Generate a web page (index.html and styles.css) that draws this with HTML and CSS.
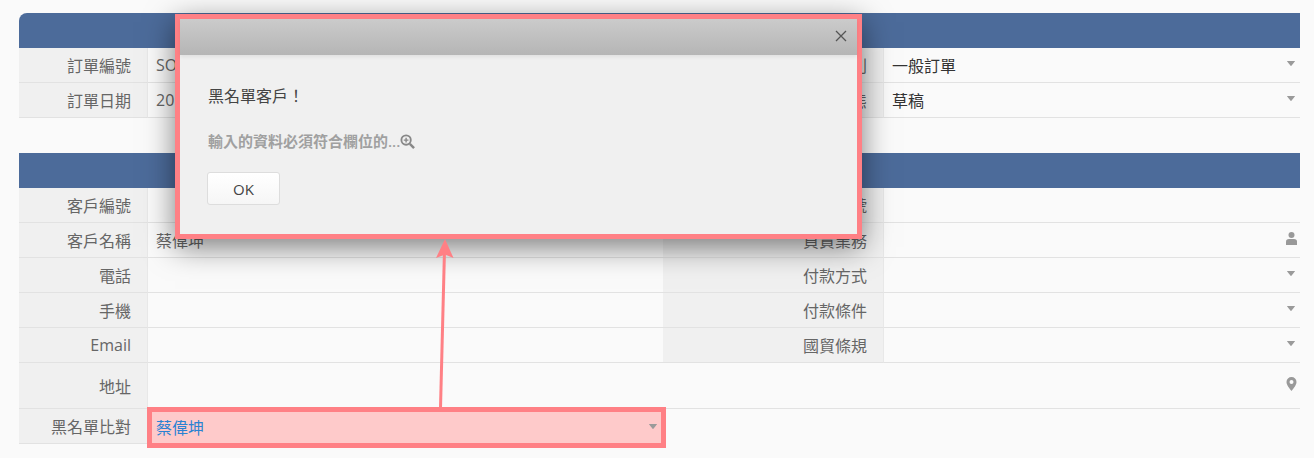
FILE: index.html
```html
<!DOCTYPE html>
<html lang="zh-Hant">
<head>
    <meta charset="UTF-8">
    <meta name="viewport" content="width=device-width, initial-scale=1.0">
    <title>訂單</title>
    <link rel="stylesheet" href="styles.css">
</head>
<body>
    <svg width="0" height="0" class="icon-defs">
        <symbol id="caret" viewBox="0 0 8 5"><path d="M.5 0h7q.5 0 .3.5L4.400 4.700q-.4.4-.8 0L.2.500Q0 0 .5 0z"/></symbol>
    </svg>

    <section class="panel panel-first">
        <div class="panel-head head-rounded"></div>
        <div class="form-grid">
            <div class="label">訂單編號</div>
            <div class="value">SO</div>
            <div class="label">訂單類別</div>
            <div class="value dark">一般訂單<svg class="caret"><use href="#caret"/></svg></div>

            <div class="label">訂單日期</div>
            <div class="value">20</div>
            <div class="label">訂單狀態</div>
            <div class="value dark">草稿<svg class="caret"><use href="#caret"/></svg></div>
        </div>
    </section>

    <section class="panel">
        <div class="panel-head"></div>
        <div class="form-grid form-grid-address">
            <div class="label">客戶編號</div>
            <div class="value"></div>
            <div class="label">統一編號</div>
            <div class="value"></div>

            <div class="label">客戶名稱</div>
            <div class="value">蔡偉坤</div>
            <div class="label">負責業務</div>
            <div class="value">
                <svg class="side-icon" viewBox="0 0 11 13"><circle cx="5.500" cy="3" r="3"/><path d="M0 13V9.500Q0 7 3 7h5q3 0 3 2.500V13z"/></svg>
            </div>

            <div class="label">電話</div>
            <div class="value"></div>
            <div class="label">付款方式</div>
            <div class="value"><svg class="caret"><use href="#caret"/></svg></div>

            <div class="label">手機</div>
            <div class="value"></div>
            <div class="label">付款條件</div>
            <div class="value"><svg class="caret"><use href="#caret"/></svg></div>

            <div class="label">Email</div>
            <div class="value"></div>
            <div class="label">國貿條規</div>
            <div class="value"><svg class="caret"><use href="#caret"/></svg></div>

            <div class="label">地址</div>
            <div class="value span-3 address">
                <svg class="side-icon" viewBox="0 0 10 14"><path fill-rule="evenodd" d="M5 0a5 5 0 0 1 5 5c0 3-3 6.500-5 9-2-2.500-5-6-5-9a5 5 0 0 1 5-5zm0 3a2 2 0 1 0 0 4 2 2 0 0 0 0-4z"/></svg>
            </div>

            <div class="label">黑名單比對</div>
            <div class="value flagged">
                <div class="flag-box"></div>
                <span class="flag-text">蔡偉坤</span>
                <svg class="caret"><use href="#caret"/></svg>
            </div>
        </div>
    </section>

    <div class="modal">
        <div class="modal-head">
            <svg class="modal-close" viewBox="0 0 12 12"><path d="M1 1l10 10M11 1L1 11"/></svg>
        </div>
        <div class="modal-body">
            <p class="modal-title">黑名單客戶！</p>
            <p class="modal-detail">輸入的資料必須符合欄位的...<svg class="zoom-icon" viewBox="0 0 16 16"><circle cx="6.500" cy="6.500" r="5"/><path d="M10.500 10.500L15 15" class="zoom-handle"/><path d="M4 6.500h5M6.500 4v5" class="zoom-plus"/></svg></p>
            <button type="button" class="btn-ok">OK</button>
        </div>
    </div>

    <svg class="arrow" width="1314" height="458" viewBox="0 0 1314 458">
        <path d="M440.500 408L444.500 250" class="arrow-line"/>
        <polygon points="445,239 453.500,258 445,254.500 436,258" class="arrow-head"/>
    </svg>
</body>
</html>
```

FILE: styles.css
```css
html, body {
    height: 100%;
    overflow: hidden;
}
body {
    margin: 0;
    padding: 13px 14px 0 19px;
    box-sizing: border-box;
    background-color: #fafafa;
    font-family: "Open Sans", "Noto Sans CJK TC", sans-serif;
    font-size: 16px;
    color: #666;
}
.icon-defs {
    position: absolute;
}
.panel-first {
    margin-bottom: 35px;
}
.panel-head {
    height: 35px;
    background-color: #4c6b9a;
}
.head-rounded {
    border-top-left-radius: 8px;
}
.form-grid {
    display: grid;
    grid-template-columns: 129px 515px 221px 416px;
    grid-auto-rows: 35px;
}
.form-grid-address {
    grid-template-rows: repeat(5, 35px) 46px 35px;
}
.label, .value {
    display: flex;
    align-items: center;
    border-bottom: 1px solid #e2e2e2;
    box-sizing: border-box;
}
.label {
    justify-content: flex-end;
    padding-right: 16px;
    background-color: #f0f0f0;
    border-right: 1px solid #e8e8e8;
}
.value {
    position: relative;
    padding-left: 8px;
}
.dark {
    color: #333;
}
.span-3 {
    grid-column: span 3;
}
.caret {
    position: absolute;
    right: 5px;
    top: 13px;
    width: 8px;
    height: 5px;
    fill: #9a9a9a;
}
.side-icon {
    position: absolute;
    right: 3px;
    top: 9px;
    width: 11px;
    height: 13px;
    fill: #999;
}
.address .side-icon {
    top: 14px;
    height: 14px;
}
.flagged {
    border-bottom: none;
}
.flag-box {
    position: absolute;
    top: -2px;
    right: -3px;
    bottom: -4px;
    left: -1px;
    border: 5px solid #ff8085;
    background-color: #fecaca;
}
.flag-text {
    position: relative;
    color: #2a82d2;
}
.flagged .caret {
    right: 6px;
    top: 15px;
}

.modal {
    position: absolute;
    left: 175px;
    top: 14px;
    width: 677px;
    height: 215px;
    border: 5px solid #ff8085;
    background-color: #f0f0f0;
    box-shadow: 0 8px 28px rgba(0, 0, 0, 0.5);
}
.modal-head {
    position: relative;
    height: 36px;
    background: linear-gradient(#cbcbcb, #b5b5b5);
    box-shadow: 0 2px 4px rgba(0, 0, 0, 0.07);
}
.modal-close {
    position: absolute;
    right: 10px;
    top: 11px;
    width: 12px;
    height: 12px;
    fill: none;
    stroke: #555;
    stroke-width: 1.300;
}
.modal-body {
    padding: 31px 28px 0 27px;
}
.modal-title {
    margin: 0 0 0 1px;
    line-height: 20px;
    color: #444;
}
.modal-detail {
    display: flex;
    align-items: center;
    margin: 25px 0 0 1px;
    line-height: 20px;
    font-size: 15px;
    font-weight: 600;
    color: #a0a0a0;
}
.zoom-icon {
    width: 15px;
    height: 15px;
    fill: none;
    stroke: #888;
    stroke-width: 2;
}
.zoom-handle {
    stroke-width: 2.600;
}
.zoom-plus {
    stroke-width: 1.500;
}
.btn-ok {
    display: block;
    width: 73px;
    height: 33px;
    margin-top: 21px;
    padding: 0;
    border: 1px solid #ddd;
    border-radius: 3px;
    background: linear-gradient(#fff, #f6f6f6);
    font-family: inherit;
    font-size: 15px;
    color: #444;
}
.arrow {
    position: absolute;
    left: 0;
    top: 0;
    pointer-events: none;
}
.arrow-line {
    stroke: #ff8085;
    stroke-width: 3;
    fill: none;
}
.arrow-head {
    fill: #ff8085;
}
```
